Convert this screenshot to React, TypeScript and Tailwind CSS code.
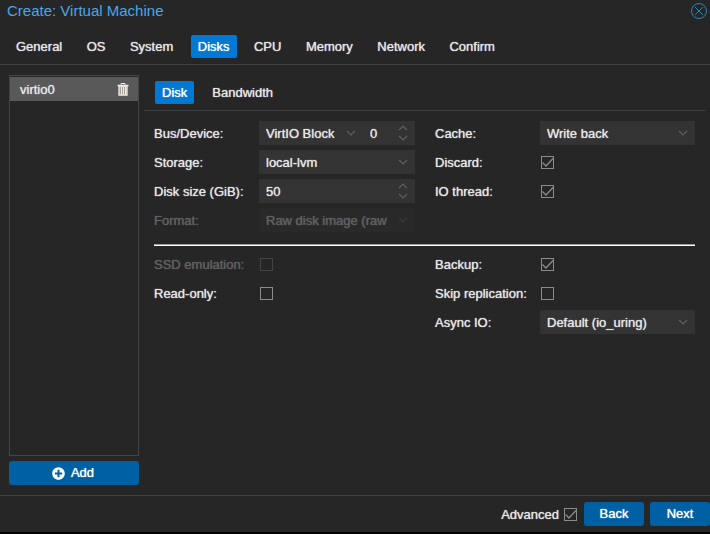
import { FunctionComponent, ReactNode } from "react"
import { FaPlusCircle } from "react-icons/fa"

const wizardTabs = ["General", "OS", "System", "Disks", "CPU", "Memory", "Network", "Confirm"]

const Chevron: FunctionComponent<{ flip?: boolean }> = ({ flip }) => (
    <svg width="10" height="6" viewBox="0 0 10 6" fill="none" stroke="#626262" strokeWidth="1.2" className="block">
        <path d={flip ? "M1 5.200L5 1l4 4.200" : "M1 .800L5 5 9 .800"} />
    </svg>
)

const TabButton: FunctionComponent<{ label: string; active?: boolean }> = ({ label, active }) => (
    <button
        type="button"
        role="tab"
        aria-selected={!!active}
        className={`h-[23px] rounded-xs px-[7px] ${active ? "bg-[#0078d4] text-white" : ""}`}
    >
        {label}
    </button>
)

const Row: FunctionComponent<{ id: string; label: string; disabled?: boolean; children: ReactNode }> = ({
    id,
    label,
    disabled,
    children,
}) => (
    <div className={`flex h-6 items-center ${disabled ? "opacity-30" : ""}`}>
        <label htmlFor={id} className="w-[105px] shrink-0 pt-0.5 whitespace-nowrap">{label}:</label>
        {children}
    </div>
)

const Select: FunctionComponent<{ id: string; value: string; disabled?: boolean }> = ({
    id,
    value,
    disabled,
}) => (
    <div className="relative min-w-0 flex-1">
        <select
            id={id}
            disabled={disabled}
            className="block h-6 w-full appearance-none bg-[#333333] pt-px pr-7 pl-[7px] opacity-100 outline-none [text-shadow:inherit]"
        >
            <option>{value}</option>
        </select>
        <span className="pointer-events-none absolute inset-y-0 right-[7px] flex items-center">
            <Chevron />
        </span>
    </div>
)

const Spinner: FunctionComponent<{ id: string; value: string; label?: string; className: string }> = ({
    id,
    value,
    label,
    className,
}) => (
    <div className={`relative ${className}`}>
        <input
            id={id}
            type="text"
            inputMode="numeric"
            aria-label={label}
            defaultValue={value}
            className="block h-6 w-full bg-[#333333] pr-7 pl-[7px] outline-none [text-shadow:inherit]"
        />
        <span className="pointer-events-none absolute inset-y-0 right-[7px] flex flex-col justify-center gap-1">
            <Chevron flip />
            <Chevron />
        </span>
    </div>
)

const Checkbox: FunctionComponent<{ id: string; checked?: boolean; disabled?: boolean }> = ({
    id,
    checked,
    disabled,
}) => (
    <span className="relative ml-px block size-[13px] shrink-0">
        <input
            id={id}
            type="checkbox"
            defaultChecked={checked}
            disabled={disabled}
            className="peer block size-[13px] appearance-none border border-[#8c8c8c]"
        />
        <svg
            viewBox="0 0 13 13"
            fill="none"
            stroke="#8c8c8c"
            strokeWidth="1.3"
            className="pointer-events-none absolute inset-0 hidden peer-checked:block"
        >
            <path d="M1.500 6.500L5 10l7-7.500" />
        </svg>
    </span>
)

const App = () => {
    return (
        <div className="flex min-h-screen flex-col border-b-2 border-black bg-[#262626] font-['Liberation_Sans',Arial,sans-serif] text-[13px] leading-4 text-[#e6e6e6] [text-shadow:0_0_1px_currentColor] [&_button]:[text-shadow:inherit]">
            <header className="flex h-[22px] items-center justify-between pr-[3px] pl-[7px]">
                <h1 className="text-[15px] text-[#4ba6ea] text-shadow-none">Create: Virtual Machine</h1>
                <button type="button" aria-label="Close">
                    <svg width="16" height="16" viewBox="0 0 16 16" fill="none" stroke="#2187bb">
                        <circle cx="8" cy="8" r="7.500" />
                        <path d="M4 4l8 8M12 4l-8 8" />
                    </svg>
                </button>
            </header>

            <nav className="border-b border-[#404040] px-[9px] pt-[13px] pb-1.5">
                <div role="tablist" className="flex max-w-[493px] justify-between">
                    {wizardTabs.map(tab => <TabButton key={tab} label={tab} active={tab === "Disks"} />)}
                </div>
            </nav>

            <main className="flex flex-1 gap-[5px] pr-[5px] pl-[9px]">
                <aside className="flex w-[130px] shrink-0 flex-col gap-[5px] pt-2.5 pb-2.5">
                    <ul className="flex-1 border border-[#454545] pt-px">
                        <li className="flex h-6 items-center justify-between bg-[#595959] pr-[9px] pl-2.5">
                            <span className="pt-0.5">virtio0</span>
                            <button type="button" aria-label="Remove virtio0">
                                <svg width="12" height="13" viewBox="0 0 12 13" fill="none" stroke="#eeeeee">
                                    <path d="M4 1.500V.500h4v1" />
                                    <path d="M.500 2.500h11" strokeWidth="1.500" />
                                    <path d="M2 3h8v9H2z" fill="#a89f90" strokeWidth="1.300" />
                                    <path d="M4.500 4v7M6.500 4v7M8.500 4v7" />
                                </svg>
                            </button>
                        </li>
                    </ul>
                    <button type="button" className="flex h-6 items-center justify-center gap-1.5 rounded-[3px] bg-[#0060a4] pr-0.5 text-white">
                        <FaPlusCircle size={13} />
                        Add
                    </button>
                </aside>

                <section className="min-w-0 flex-1">
                    <div role="tablist" className="flex gap-[11px] border-b border-[#404040] pt-4 pb-1.5 pl-[11px]">
                        <TabButton label="Disk" active />
                        <TabButton label="Bandwidth" />
                    </div>

                    <form className="px-2.5 pt-2.5">
                        <div className="grid grid-cols-[261fr_260fr] gap-x-5">
                            <div className="flex flex-col gap-[5px]">
                                <Row id="bus" label="Bus/Device">
                                    <Select id="bus" value="VirtIO Block" />
                                    <Spinner id="device" value="0" label="Device number" className="w-[52px]" />
                                </Row>
                                <Row id="storage" label="Storage">
                                    <Select id="storage" value="local-lvm" />
                                </Row>
                                <Row id="size" label="Disk size (GiB)">
                                    <Spinner id="size" value="50" className="flex-1" />
                                </Row>
                                <Row id="format" label="Format" disabled>
                                    <Select id="format" value="Raw disk image (raw)" disabled />
                                </Row>
                            </div>
                            <div className="flex flex-col gap-[5px]">
                                <Row id="cache" label="Cache">
                                    <Select id="cache" value="Write back" />
                                </Row>
                                <Row id="discard" label="Discard">
                                    <Checkbox id="discard" checked />
                                </Row>
                                <Row id="iothread" label="IO thread">
                                    <Checkbox id="iothread" checked />
                                </Row>
                            </div>
                        </div>

                        <hr className="mt-3 mb-1.5 border-t border-b border-t-[#9a9a9a] border-b-white" />

                        <div className="grid grid-cols-[261fr_260fr] gap-x-5">
                            <div className="flex flex-col gap-[5px]">
                                <Row id="ssd" label="SSD emulation" disabled>
                                    <Checkbox id="ssd" disabled />
                                </Row>
                                <Row id="readonly" label="Read-only">
                                    <Checkbox id="readonly" />
                                </Row>
                            </div>
                            <div className="flex flex-col gap-[5px]">
                                <Row id="backup" label="Backup">
                                    <Checkbox id="backup" checked />
                                </Row>
                                <Row id="replication" label="Skip replication">
                                    <Checkbox id="replication" />
                                </Row>
                                <Row id="aio" label="Async IO">
                                    <Select id="aio" value="Default (io_uring)" />
                                </Row>
                            </div>
                        </div>
                    </form>
                </section>
            </main>

            <footer className="flex items-center justify-end gap-1.5 border-t border-[#404040] pt-1.5 pb-1.5">
                <div className="flex items-center gap-1 pr-px">
                    <label htmlFor="advanced" className="pt-0.5">Advanced</label>
                    <Checkbox id="advanced" checked />
                </div>
                <button type="button" className="h-6 w-[60px] rounded-[3px] bg-[#0060a4] text-white">Back</button>
                <button type="button" className="h-6 w-[60px] rounded-[3px] bg-[#0060a4] text-white">Next</button>
            </footer>
        </div>
    )
}

export default App
